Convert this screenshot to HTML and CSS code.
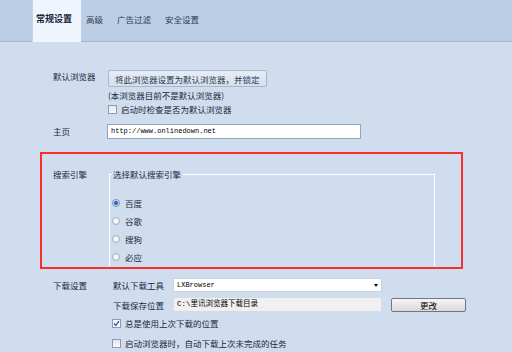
FILE: index.html
```html
<!DOCTYPE html>
<html lang="zh-CN">
<head>
    <meta charset="UTF-8">
    <title>常规设置</title>
    <link rel="stylesheet" href="styles.css">
</head>
<body>

    <div class="tabs">
        <div class="tab active">常规设置</div>
        <div class="tab">高级</div>
        <div class="tab">广告过滤</div>
        <div class="tab">安全设置</div>
    </div>

    <div class="page">
        <!-- 默认浏览器 -->
        <div class="row">
            <div class="label">默认浏览器</div>
            <div class="field">
                <button class="btn-default">将此浏览器设置为默认浏览器，并锁定</button>
                <div class="note">(本浏览器目前不是默认浏览器)</div>
                <div class="check"><span class="box"></span>启动时检查是否为默认浏览器</div>
            </div>
        </div>

        <!-- 主页 -->
        <div class="row home">
            <div class="label">主页</div>
            <div class="field">
                <div class="text-input">http://www.onlinedown.net</div>
            </div>
        </div>

        <!-- 搜索引擎 -->
        <div class="row engine">
            <div class="label">搜索引擎</div>
            <fieldset class="engines">
                <legend>选择默认搜索引擎</legend>
                <div class="radio-row"><span class="radio on"></span>百度</div>
                <div class="radio-row"><span class="radio"></span>谷歌</div>
                <div class="radio-row"><span class="radio"></span>搜狗</div>
                <div class="radio-row"><span class="radio"></span>必应</div>
            </fieldset>
        </div>

        <!-- 下载设置 -->
        <div class="row download">
            <div class="label">下载设置</div>
            <div class="dl">
                <div class="dl-grid">
                    <div>默认下载工具</div>
                    <div class="select">LXBrowser<span class="arrow"></span></div>
                    <div></div>
                    <div>下载保存位置</div>
                    <div class="path-input">C:\里讯浏览器下载目录</div>
                    <button class="btn-change">更改</button>
                </div>
                <div class="check first">
                    <span class="box checked">
                        <svg width="7" height="7" viewBox="0 0 7 7"><path d="M1 3.5 L2.8 5.5 L6 1.2" fill="none" stroke="#2b5fae" stroke-width="1.4"/></svg>
                    </span>总是使用上次下载的位置
                </div>
                <div class="check last"><span class="box"></span>启动浏览器时，自动下载上次未完成的任务</div>
            </div>
        </div>
    </div>

</body>
</html>
```

FILE: styles.css
```css
* {
    box-sizing: border-box;
}

body {
    margin: 0;
    width: 512px;
    height: 352px;
    overflow: hidden;
    background-color: #d0ddee;
    font-family: "Noto Sans CJK SC", sans-serif;
    font-size: 8.5px;
    color: #1a2940;
}

/* Tab strip */
.tabs {
    display: flex;
    height: 42px;
    padding-left: 32px;
    background-color: #bccee5;
    border-bottom: 1px solid #a4b7d1;
}

.tab {
    padding: 0 7px;
    line-height: 38px;
    color: #2b3c57;
}

.tab.active {
    height: 42px;
    margin-right: -2px;
    padding: 0 9px 0 3px;
    background-color: #eff5fc;
    border-left: 1px solid #c6d3e4;
    font-size: 9px;
    font-weight: bold;
    color: #15233a;
}

/* Settings rows */
.page {
    padding: 28px 0 0 40px;
}

.row {
    display: grid;
    grid-template-columns: 55px 1fr;
    padding-left: 13px;
}

.label {
    line-height: 12px;
}

.btn-default {
    display: block;
    height: 17px;
    padding: 0 6px;
    border: 1px solid #a7b8cd;
    border-radius: 2px;
    background: linear-gradient(#e6edf5, #d5dfeb);
    font: inherit;
    color: #2a3a52;
}

.note {
    margin-top: 2px;
    line-height: 12px;
}

.check {
    display: flex;
    align-items: center;
    gap: 4px;
    height: 12px;
    margin-top: 2px;
}

.box {
    display: flex;
    align-items: center;
    justify-content: center;
    width: 9px;
    height: 9px;
    border: 1px solid #8c9bb0;
    background: linear-gradient(#e4e6e9, #fafafa);
}

.box.checked {
    background: #f6f8fb;
}

.home {
    margin-top: 9px;
}

.home .label {
    line-height: 15px;
}

.text-input {
    width: 254px;
    height: 15px;
    margin-left: -1px;
    padding: 0 3px;
    border: 1px solid #8ea4c0;
    background-color: #fff;
    font-family: "Liberation Mono", monospace;
    font-size: 7px;
    line-height: 13px;
    color: #000;
}

/* Search engine block (highlighted) */
.engine {
    width: 423px;
    margin-top: 13px;
    padding: 14px 0 1px 11px;
    border: 2px solid #f52f2f;
    grid-template-columns: 56px 1fr;
}

.engines {
    width: 326px;
    min-width: 0;
    margin: 0;
    padding: 14px 0 0 2px;
    border: 1px solid #fff;
    border-bottom: none;
}

.engines legend {
    margin-left: 0;
    padding: 0 2px 0 1px;
    line-height: 12px;
}

.radio-row {
    display: flex;
    align-items: center;
    gap: 5px;
    height: 18px;
}

.radio {
    width: 8px;
    height: 8px;
    border: 1px solid #a6b2c1;
    border-radius: 50%;
    background: radial-gradient(circle, #ffffff 0, #dfe5ec 4px);
}

.radio.on {
    border-color: #7d94b2;
    background: radial-gradient(circle, #1f63c3 0, #1f63c3 1.4px, #b9d0ef 2.4px, #f3f7fc 4px);
}

/* Downloads */
.download {
    margin-top: 9px;
}

.download .label {
    line-height: 14px;
}

.dl {
    padding-left: 4px;
}

.dl-grid {
    display: grid;
    grid-template-columns: 51px 209px 75px;
    column-gap: 9px;
    row-gap: 5px;
    align-items: center;
    padding-left: 1px;
    line-height: 12px;
}

.select {
    position: relative;
    height: 14px;
    padding: 0 3px;
    border: 1px solid #c9d4e2;
    background-color: #fff;
    font-family: "Liberation Mono", monospace;
    font-size: 7px;
    line-height: 12px;
    color: #000;
}

.arrow {
    position: absolute;
    right: 3px;
    top: 5px;
    border-left: 2.5px solid transparent;
    border-right: 2.5px solid transparent;
    border-top: 3px solid #000;
}

.path-input {
    height: 15px;
    padding: 0 3px;
    border: 1px solid #d6dce4;
    background-color: #f0f0f0;
    font-family: "Liberation Mono", "Noto Sans CJK SC", monospace;
    font-size: 7.5px;
    line-height: 13px;
    color: #000;
}

.btn-change {
    height: 14px;
    padding: 0;
    border: 1px solid #767676;
    border-radius: 2px;
    background: linear-gradient(#f6f6f6, #d9d9d9);
    font: inherit;
    line-height: 12px;
    color: #000;
}

.check.first {
    margin-top: 5px;
}

.check.last {
    margin-top: 8px;
}
```
